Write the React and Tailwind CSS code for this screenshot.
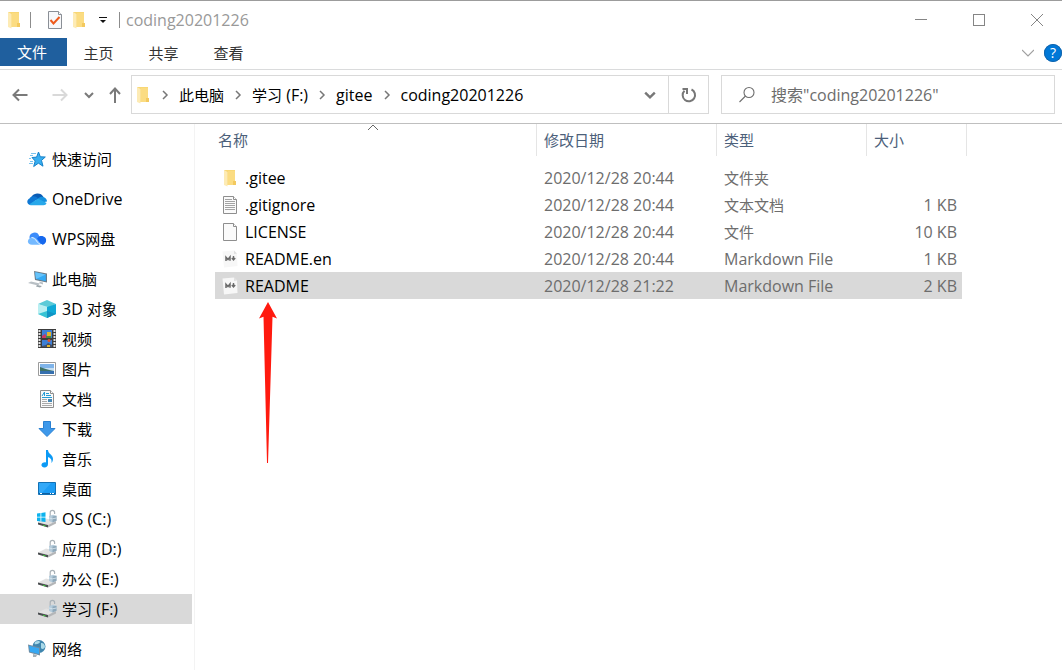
import React, { useState } from 'react';

const places = [
  { items: [{ name: '快速访问', icon: StarIcon }] },
  { items: [{ name: 'OneDrive', icon: OneDriveIcon }] },
  { items: [{ name: 'WPS网盘', icon: WpsIcon }] },
  {
    items: [
      { name: '此电脑', icon: ComputerIcon },
      { name: '3D 对象', icon: CubeIcon, child: true },
      { name: '视频', icon: VideoIcon, child: true },
      { name: '图片', icon: PictureIcon, child: true },
      { name: '文档', icon: DocumentsIcon, child: true },
      { name: '下载', icon: DownloadIcon, child: true },
      { name: '音乐', icon: MusicIcon, child: true },
      { name: '桌面', icon: DesktopIcon, child: true },
      { name: 'OS (C:)', icon: SystemDriveIcon, child: true },
      { name: '应用 (D:)', icon: DriveIcon, child: true },
      { name: '办公 (E:)', icon: DriveIcon, child: true },
      { name: '学习 (F:)', icon: DriveIcon, child: true },
    ],
  },
  { items: [{ name: '网络', icon: NetworkIcon }] },
];

const files = [
  { name: '.gitee', date: '2020/12/28 20:44', type: '文件夹', size: '', icon: FolderIcon },
  { name: '.gitignore', date: '2020/12/28 20:44', type: '文本文档', size: '1 KB', icon: TextFileIcon },
  { name: 'LICENSE', date: '2020/12/28 20:44', type: '文件', size: '10 KB', icon: BlankFileIcon },
  { name: 'README.en', date: '2020/12/28 20:44', type: 'Markdown File', size: '1 KB', icon: MarkdownIcon },
  { name: 'README', date: '2020/12/28 21:22', type: 'Markdown File', size: '2 KB', icon: MarkdownIcon },
];

const crumbs = ['此电脑', '学习 (F:)', 'gitee', 'coding20201226'];

// Chinese glyphs are set one pixel smaller than the Latin ones
function Label({ text }) {
  return text.split(/([\u4e00-\u9fff]+)/).map((part, i) =>
    i % 2 ? (
      <span key={i} className="text-[15px]">
        {part}
      </span>
    ) : (
      part
    )
  );
}

function Chevron({ className = '', d = 'M1 3l4 4 4-4', width = 2 }) {
  return (
    <svg viewBox="0 0 10 10" className={className} fill="none" stroke="currentColor" strokeWidth={width}>
      <path d={d} />
    </svg>
  );
}

function FolderIcon() {
  return (
    <svg viewBox="0 0 16 18" className="h-[18px] w-4">
      <path d="M2 1h11v11h1v4H5z" fill="#f8d775" />
      <path d="M6 2h7v10h1v4H6z" fill="#fbdc82" />
      <path d="M2 1l3.500 2v14.500L2 16z" fill="#fdebb5" />
      <path d="M11 12h3v4h-3z" fill="#f3c95f" />
    </svg>
  );
}

function BlankFileIcon() {
  return (
    <svg viewBox="0 0 16 18" className="h-[18px] w-4">
      <path d="M1.500.5h10l3 3v14h-13z" fill="#fafafa" stroke="#8e8e8e" />
      <path d="M11.500.5v3h3" fill="#fff" stroke="#8e8e8e" />
    </svg>
  );
}

function TextFileIcon() {
  return (
    <svg viewBox="0 0 16 18" className="h-[18px] w-4">
      <path d="M1.500.5h10l3 3v14h-13z" fill="#fafafa" stroke="#8e8e8e" />
      <path d="M11.500.5v3h3" fill="#fff" stroke="#8e8e8e" />
      <path d="M3 3.500h7M3 5.500h10M3 7.500h10M3 9.500h10M3 11.500h10M3 13.500h10" stroke="#a3a3a3" />
    </svg>
  );
}

function MarkdownIcon() {
  return (
    <svg viewBox="0 0 16 18" className="h-[18px] w-4">
      <path d="M.5 1.500L12 .5l3 3 .5 12.500L2 17.500z" fill="#f7f7f7" />
      <path d="M12 .5l3 3-3 .4z" fill="#e0e0e0" />
      <path d="M4 11V7.200l2 2.300 2-2.500v3.800" fill="none" stroke="#6a6a6a" strokeWidth="1.500" />
      <path d="M11.500 6v3.500M9.800 8l1.700 2 1.700-2" fill="none" stroke="#6a6a6a" strokeWidth="1.400" />
    </svg>
  );
}

function PropertiesIcon() {
  return (
    <svg viewBox="0 0 16 18" className="h-[18px] w-4">
      <path d="M1.500.5h10l3 3v14h-13z" fill="#f7f8fa" stroke="#8a8f96" />
      <path d="M11.500.5v3h3" fill="#fff" stroke="#8a8f96" />
      <path d="M3.500 9l3 3.500 6-6.500" fill="none" stroke="#ee5a1c" strokeWidth="2" />
    </svg>
  );
}

function StarIcon() {
  return (
    <svg viewBox="0 0 20 20" className="size-5">
      <path d="M11.500 3l1.800 4.800 5 .2-3.800 3.400 1.500 5.800-4.600-3-4.700 3.300 1.500-5.500-3.200-3.500 4.600-.4z" fill="#38aef0" stroke="#1681c9" />
      <path d="M4 4.500h5M3 6.500h3M2 9.500h2M3 12.500h3M2 14.500h4" stroke="#7cc4ee" />
    </svg>
  );
}

function OneDriveIcon() {
  return (
    <svg viewBox="0 0 20 20" className="size-5">
      <path d="M4 9a7 7 0 0 1 12.500-1L12 12z" fill="#0a5cb5" />
      <path d="M5 7.500c3-.8 4.500.5 6 1.500L4 16.200C-.5 16-.8 11 2.500 9.500 3 8.500 4 7.700 5 7.500z" fill="#0f78d4" />
      <path d="M11 9.500c1.500-1.500 3.500-2 5.500-1.500 2 .5 3.500 2.500 3.500 4.500l-5 1z" fill="#1490df" />
      <path d="M2 15.500l9-6 8.500 4.500c-.5 1.500-1.500 2.200-3 2.200H4.500c-1 0-1.800-.2-2.500-.7z" fill="#28a8ea" />
    </svg>
  );
}

function WpsIcon() {
  return (
    <svg viewBox="0 0 20 20" className="size-5">
      <path d="M2.500 9a5 5 0 0 1 9.700-2L17 15h-4z" fill="#3c8cfa" />
      <path d="M12 7.500c4-1.500 8 1 7 5-.4 2-2 3.200-4 3.200l-5-6z" fill="#1668ee" />
      <path d="M4 8.500c3-1 5 .5 6.500 2.500l3.500 4.700H5C0 15.700-.5 10.500 4 8.500z" fill="#74b9ff" />
      <path d="M4.500 8.500c5 0 5 7 10.500 7.200" fill="none" stroke="#e8f4ff" />
    </svg>
  );
}

function ComputerIcon() {
  return (
    <svg viewBox="0 0 20 20" className="size-5">
      <path d="M7 2l13 2.500v9L8 11z" fill="#6d7c88" />
      <path d="M8.200 3.300l10.600 2.200v6.800L9 10z" fill="#34aaf5" />
      <path d="M8.200 3.300l10.600 2.200L9 10z" fill="#66c3fa" />
      <path d="M12 12.500l4 1v2l-3-1zM1 14l3-1.500 9 2-2 2z" fill="#b9c0c5" />
      <path d="M10 16l5 1-2 1.500-4-1z" fill="#9aa4aa" />
    </svg>
  );
}

function CubeIcon() {
  return (
    <svg viewBox="0 0 20 20" className="size-5">
      <path d="M1 5l9-4 9 4-8 4z" fill="#5ccbd8" />
      <path d="M1 5l10 3v11l-10-4z" fill="#b9eff2" />
      <path d="M10 8l9-3v10l-9 4z" fill="#10a9d6" />
      <path d="M1 15l9-3v7z" fill="#37c3d4" />
      <path d="M10 12l9 3-9 4z" fill="#1194c4" />
    </svg>
  );
}

function VideoIcon() {
  return (
    <svg viewBox="0 0 20 20" className="size-5">
      <path d="M1 0h18v19H1z" fill="#3c3c3c" />
      <path d="M5 1h10v8H5zM5 11h10v7H5z" fill="#3d7fd6" />
      <path d="M2.500 1v17M17.500 1v17" stroke="#e3e3e3" strokeWidth="2" strokeDasharray="2 1" />
      <path d="M5 7l3-2 3 4H5z" fill="#c93a66" />
      <path d="M5 17l4-1 2-2 4 2v2H5z" fill="#43506a" />
      <path d="M10 3h4v4h-4zM10 16h3v2h-3z" fill="#e3b52a" />
      <path d="M9 7h5v2H9z" fill="#4d8b3c" />
      <circle cx="12" cy="11.500" r="1.500" fill="#e0542e" />
    </svg>
  );
}

function PictureIcon() {
  return (
    <svg viewBox="0 0 20 20" className="size-5">
      <path d="M1.500 3.500h17v13h-17z" fill="#fff" stroke="#9b9b9b" />
      <path d="M3 5h14v10H3z" fill="#7fb4ea" />
      <path d="M3 9h14v3H3z" fill="#c5dff3" />
      <path d="M3 8c4 1 7 3 14 4H3z" fill="#3e7165" />
      <path d="M3 12h14v3H3z" fill="#356fae" />
    </svg>
  );
}

function DocumentsIcon() {
  return (
    <svg viewBox="0 0 20 20" className="size-5">
      <path d="M3.500 1.500h10l3 3v14h-13z" fill="#fafafa" stroke="#8e8e8e" />
      <path d="M13.500 1.500v3h3" fill="#fff" stroke="#8e8e8e" />
      <path d="M5 7l2.500-4v4M9 4.500h3M9 6.500h5M5 8.500h10" fill="none" stroke="#249bd5" />
      <path d="M5 10.500h5M5 12.500h5M5 14.500h10M5 16.500h10" stroke="#aaa" />
      <path d="M11 10h4v3h-4z" fill="#4688b5" />
    </svg>
  );
}

function DownloadIcon() {
  return (
    <svg viewBox="0 0 20 20" className="size-5">
      <path d="M6.500 2.500h7v7h4.500l-8 8-8-8h4.500z" fill="#3d98ea" stroke="#2980d2" />
    </svg>
  );
}

function MusicIcon() {
  return (
    <svg viewBox="0 0 20 20" className="size-5">
      <path d="M9 1h2c0 4 5 4.500 5 9 0 1.500-.6 3-1.600 4 .8-3.500-1-5-3.400-6v7c0 2-1.500 3.500-3.500 3.500S4 17 4.500 15.500c.6-1.700 2.700-2.500 4.500-2z" fill="#0c9af5" />
    </svg>
  );
}

function DesktopIcon() {
  return (
    <svg viewBox="0 0 20 20" className="size-5">
      <path d="M1.500 3.500h17v12h-17z" fill="#1c9cf4" stroke="#1271b5" />
      <path d="M2 4h12L5 14H2z" fill="#33a9f8" />
      <path d="M2 14.500h16" stroke="#0f5f9f" />
      <path d="M3 14.500h2M13 14.500h1M15 14.500h2" stroke="#fff" />
    </svg>
  );
}

function DriveShapes() {
  return (
    <>
      <path d="M13.200 7V3.500a2.200 2.200 0 0 1 4.400 0V5" fill="none" stroke="#aab2b8" strokeWidth="1.200" />
      <path d="M1 13.500l8-4 10 2.500-8 4z" fill="#e2e2e2" />
      <path d="M1 13.500l10 2.500v2.500L1 15.500z" fill="#4a4d50" />
      <path d="M11 16l8-4v2.500l-8 4z" fill="#b4b6b8" />
      <path d="M6 15.800l2.500.6v1L6 16.700z" fill="#42d13f" />
      <path d="M12 7l4-1.200 3.500.9v5L15.500 13.500 12 12z" fill="#b4cbdb" />
      <path d="M15.500 7.500l4-.8v5l-4 1.800z" fill="#8ea8ba" />
      <path d="M12 9l3.500.8 4-.8" fill="none" stroke="#dce8f0" strokeWidth=".8" />
    </>
  );
}

function DriveIcon() {
  return (
    <svg viewBox="0 0 20 20" className="size-5">
      <DriveShapes />
    </svg>
  );
}

function SystemDriveIcon() {
  return (
    <svg viewBox="0 0 20 20" className="size-5">
      <DriveShapes />
      <path d="M0 4.500L3.500 4v3.800H0zM4.300 3.900L8.500 3.300v4.500H4.300zM0 8.600h3.500v3.800L0 12zM4.300 8.600h4.200v4.500l-4.200-.6z" fill="#0db3ee" />
    </svg>
  );
}

function NetworkIcon() {
  return (
    <svg viewBox="0 0 20 20" className="size-5">
      <circle cx="12" cy="7.500" r="6.500" fill="#3f86ae" />
      <path d="M8 3c2-1.500 5-1.500 5 0S9 6 7.500 5zM14 4c2-.5 4 1.500 4 3.500S15 11 14 9z" fill="#a9d9e8" />
      <path d="M1 5.500l12 3v8L2 13.500z" fill="#6f8da3" />
      <path d="M2 6.800l10 2.500v5.800L3 12.700z" fill="#35a8f3" />
      <path d="M6 15l4 1-1 2H6z" fill="#a5b0b7" />
    </svg>
  );
}

function TitleBar() {
  return (
    <header className="flex h-[38px] items-center border-t border-[#9c9c9c] pl-1.5">
      <FolderIcon />
      <span className="mx-2 h-4 w-px bg-[#8c8c8c]" />
      <div className="flex items-center gap-2 pl-2">
        <button aria-label="属性">
          <PropertiesIcon />
        </button>
        <button aria-label="新建文件夹">
          <FolderIcon />
        </button>
        <button aria-label="自定义快速访问工具栏" className="ml-1">
          <svg viewBox="0 0 8 8" className="size-2">
            <path d="M0 1.500h8" stroke="#111" />
            <path d="M1 4h6L4 7z" fill="#111" />
          </svg>
        </button>
      </div>
      <span className="ml-3 h-4 w-px bg-[#8c8c8c]" />
      <h1 className="ml-1.5 text-[#999]">coding20201226</h1>
      <div className="ml-auto flex gap-2 self-stretch text-[#858585]">
        <button aria-label="最小化" className="grid w-[50px] place-items-center">
          <span className="h-px w-3 bg-current" />
        </button>
        <button aria-label="最大化" className="grid w-[50px] place-items-center">
          <span className="size-3 border border-current" />
        </button>
        <button aria-label="关闭" className="grid w-[50px] place-items-center">
          <svg viewBox="0 0 12 12" className="size-3" stroke="currentColor">
            <path d="M0 0l12 12M12 0L0 12" />
          </svg>
        </button>
      </div>
    </header>
  );
}

function Ribbon() {
  return (
    <nav className="flex h-8 items-start border-b border-[#dadbdc] text-[15px] text-[#333]">
      <button className="h-7 w-[67px] bg-[#1f5f9e] pr-[3px] text-white">文件</button>
      {['主页', '共享', '查看'].map((tab) => (
        <button key={tab} className="h-[30px] w-[65px] pr-0.5">
          {tab}
        </button>
      ))}
      <div className="ml-auto flex h-[30px] shrink-0 items-center gap-2.5">
        <button aria-label="展开功能区" className="text-[#a0a0a0]">
          <Chevron className="size-3" width={1} d="M0 2.500l5 5 5-5" />
        </button>
        <button
          aria-label="帮助"
          className="grid size-[18px] place-items-center rounded-full bg-[#0078d7] text-sm leading-none text-white ring-1 ring-[#1565ab] ring-inset"
        >
          ?
        </button>
      </div>
    </nav>
  );
}

function AddressBar() {
  return (
    <div className="flex h-[54px] items-start border-b border-[#bfbfbf] pt-[5px] pr-[7px]">
      <div className="flex h-10 text-[#7a7a7a]">
        <button aria-label="后退" className="grid w-10 place-items-center">
          <svg viewBox="0 0 16 14" className="h-3.5 w-4" fill="none" stroke="currentColor" strokeWidth="2">
            <path d="M15.500 7H1.500M7 1.500L1.500 7 7 12.500" />
          </svg>
        </button>
        <button aria-label="前进" disabled className="grid w-[39px] place-items-center text-[#d9d9d9]">
          <svg viewBox="0 0 16 14" className="h-3.5 w-4" fill="none" stroke="currentColor" strokeWidth="2">
            <path d="M.5 7h14M9 1.500L14.500 7 9 12.500" />
          </svg>
        </button>
        <button aria-label="最近浏览的位置" className="grid w-5 place-items-center">
          <Chevron className="size-2.5" />
        </button>
        <button aria-label="上移" className="grid w-8 place-items-center">
          <svg viewBox="0 0 12 16" className="h-4 w-3" fill="none" stroke="currentColor" strokeWidth="2">
            <path d="M6 16V2M1 7l5-5.500L11 7" />
          </svg>
        </button>
      </div>

      <div className="flex h-[39px] min-w-0 flex-[576] items-stretch border border-[#d9d9d9]">
        <div className="flex min-w-0 flex-1 items-center pl-[3px]">
          <FolderIcon />
          {crumbs.map((crumb) => (
            <React.Fragment key={crumb}>
              <Chevron className="mx-[9px] size-2.5 shrink-0 text-[#777]" d="M3 1l4 4-4 4" width={1.5} />
              <button className="whitespace-nowrap text-black">
                <Label text={crumb} />
              </button>
            </React.Fragment>
          ))}
        </div>
        <button aria-label="以前的位置" className="grid w-9 place-items-center text-[#777]">
          <Chevron className="size-3" width={2} />
        </button>
        <button aria-label="刷新" className="grid w-10 place-items-center border-l border-[#d9d9d9] text-[#777]">
          <svg viewBox="0 0 16 16" className="size-4" fill="none" stroke="currentColor" strokeWidth="2">
            <path d="M10.500 2.500A6.200 6.200 0 1 1 3.500 3.700" />
            <path d="M1.500 2H6v5" />
          </svg>
        </button>
      </div>

      <label className="ml-3 flex h-[39px] min-w-0 flex-[316] items-center border border-[#d9d9d9] pl-4 text-[#6d6d6d]">
        <svg viewBox="0 0 18 18" className="size-[18px] shrink-0" fill="none" stroke="currentColor" strokeWidth="1.100">
          <circle cx="11" cy="6.500" r="5" />
          <path d="M7.500 10L1.500 16" />
        </svg>
        <input
          type="search"
          aria-label="搜索"
          placeholder={'搜索"coding20201226"'}
          className="ml-[15px] w-full min-w-0 bg-transparent outline-none placeholder:text-[#6d6d6d]"
        />
      </label>
    </div>
  );
}

function Sidebar({ current, onSelect }) {
  return (
    <aside className="w-[195px] shrink-0 border-r border-[#f3f3f3] pt-5 pr-0.5">
      <div className="flex flex-col gap-2.5">
        {places.map((group) => (
          <ul key={group.items[0].name}>
            {group.items.map(({ name, icon: Icon, child }) => (
              <li key={name}>
                <button
                  onClick={() => onSelect(name)}
                  className={`flex h-[30px] w-full items-center gap-[5px] text-left text-black ${
                    child ? 'pl-[37px]' : 'pl-[27px]'
                  } ${current === name ? 'bg-[#d9d9d9]' : ''}`}
                >
                  <Icon />
                  <span>
                    <Label text={name} />
                  </span>
                </button>
              </li>
            ))}
          </ul>
        ))}
      </div>
    </aside>
  );
}

function FileList({ selected, onSelect }) {
  return (
    <main className="relative min-w-0 flex-1 pl-5">
      <table className="w-[752px] table-fixed border-separate border-spacing-0 text-left">
        <thead className="text-[15px] text-[#4c607a]">
          <tr className="h-8">
            <th className="relative w-[322px] border-r border-[#e5e5e5] pl-[3px] font-normal">
              名称
              <Chevron className="absolute top-0 left-[153px] size-2.5 text-[#666]" d="M0 6l5-5 5 5" width={1} />
            </th>
            <th className="w-[180px] border-r border-[#e5e5e5] pl-[7px] font-normal">修改日期</th>
            <th className="w-[150px] border-r border-[#e5e5e5] pl-[7px] font-normal">类型</th>
            <th className="border-r border-[#e5e5e5] pl-[7px] font-normal">大小</th>
          </tr>
        </thead>
        <tbody className="text-[#6d6d6d]">
          <tr className="h-2" aria-hidden="true" />
          {files.map(({ name, date, type, size, icon: Icon }) => {
            const cell = selected === name ? 'bg-[#d9d9d9]' : '';
            return (
              <tr key={name} className="h-[27px]" onClick={() => onSelect(name)}>
                <td className={`pl-[7px] text-black ${cell}`}>
                  <div className="flex items-center gap-[7px]">
                    <Icon />
                    {name}
                  </div>
                </td>
                <td className={`pl-[7px] ${cell}`}>{date}</td>
                <td className={`pl-[7px] ${cell}`}>
                  <Label text={type} />
                </td>
                <td className={`border-r-[5px] border-transparent bg-clip-padding pr-[5px] text-right ${cell}`}>{size}</td>
              </tr>
            );
          })}
        </tbody>
      </table>

      {/* red arrow pointing at the README row */}
      <svg viewBox="0 0 20 162" className="absolute top-[178px] left-[63px] h-[162px] w-5">
        <path d="M10 0L19 16.500l-4.500-1.800L10 161H9L5.500 14.700 1 16.500z" fill="#ff1a0f" />
      </svg>
    </main>
  );
}

export default function App() {
  const [place, setPlace] = useState('学习 (F:)');
  const [file, setFile] = useState('README');

  return (
    <div className="flex min-h-screen flex-col overflow-hidden bg-white font-['Open_Sans','Noto_Sans_CJK_SC',sans-serif] text-base leading-6">
      <TitleBar />
      <Ribbon />
      <AddressBar />
      <div className="flex flex-1">
        <Sidebar current={place} onSelect={setPlace} />
        <FileList selected={file} onSelect={setFile} />
      </div>
    </div>
  );
}
